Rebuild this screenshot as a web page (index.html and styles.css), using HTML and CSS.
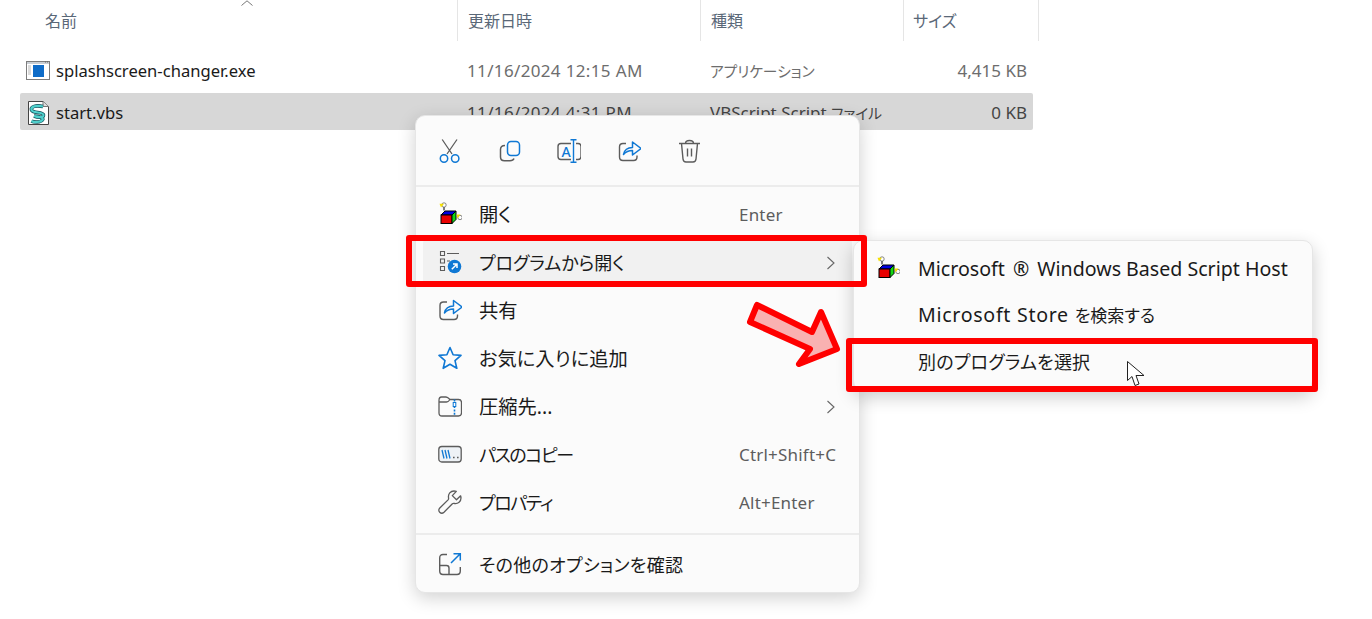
FILE: index.html
```html
<!DOCTYPE html>
<html lang="ja">
<head>
  <meta charset="UTF-8">
  <title>start.vbs</title>
  <link rel="stylesheet" href="styles.css">
</head>
<body>

  <div class="list-head">
    <div class="col-name">名前<svg class="sort" width="14" height="6" viewBox="0 0 14 6"><path d="M1.500 5.500 7 0.800 12.500 5.500" fill="none" stroke="#777" stroke-width="1"/></svg></div>
    <div class="col-date">更新日時</div>
    <div class="col-type">種類</div>
    <div class="col-size">サイズ</div>
  </div>

  <div class="row">
    <div class="cell-name">
      <svg class="file-icon" width="24" height="24" viewBox="0 0 24 24">
        <rect x="0.500" y="2.500" width="23" height="18" fill="#fff" stroke="#7d7d7d"/>
        <rect x="1" y="3" width="22" height="2" fill="#c9ced4"/>
        <rect x="7" y="6" width="11" height="12" fill="#0f6cc8"/>
        <path d="M2 7h3M2 9h3M2 11h3M2 13h3M2 15h3" stroke="#b8b8b8"/>
        <path d="M19 3h1M21 3h1" stroke="#666"/>
      </svg>
      splashscreen-changer.exe
    </div>
    <div class="cell-date">11/16/2024 12:15 AM</div>
    <div class="cell-type"><span class="kana">アプリケーション</span></div>
    <div class="cell-size">4,415 KB</div>
  </div>

  <div class="row selected">
    <div class="cell-name">
      <svg class="file-icon" width="24" height="24" viewBox="0 0 24 24">
        <path d="M2.500 0.500H17L22.500 5.500V23.500H2.500Z" fill="#fff" stroke="#444"/>
        <path d="M17 0.500V5.500H22.500" fill="#ddd" stroke="#777"/>
        <path d="M17 5.500C10 4 4.500 5.500 5.500 9S17 10.500 17.500 14 10.500 16 8 15M8 15C12 15.500 18.500 16.500 16.500 19S8 21.500 5.500 20" fill="none" stroke="#14505a" stroke-width="3.600"/>
        <path d="M17 5.500C10 4 4.500 5.500 5.500 9S17 10.500 17.500 14 10.500 16 8 15M8 15C12 15.500 18.500 16.500 16.500 19S8 21.500 5.500 20" fill="none" stroke="#4fd0cc" stroke-width="2.200"/>
      </svg>
      start.vbs
    </div>
    <div class="cell-date">11/16/2024 4:31 PM</div>
    <div class="cell-type">VBScript Script <span class="kana">ファイル</span></div>
    <div class="cell-size">0 KB</div>
  </div>

  <div class="menu">
    <div class="toolbar">
      <svg class="icon" viewBox="0 0 24 24">
        <path d="M5.200 0.500 15 15M20 0.500 10 15" fill="none" stroke="#5c5c5c" stroke-width="1.300"/>
        <circle cx="7" cy="19.500" r="3.700" fill="none" stroke="#0f78d4" stroke-width="1.500"/>
        <circle cx="18.200" cy="19.500" r="3.700" fill="none" stroke="#0f78d4" stroke-width="1.500"/>
      </svg>
      <svg class="icon" viewBox="0 0 24 24">
        <rect x="10.500" y="2.500" width="12" height="14" rx="3.500" fill="none" stroke="#0f78d4" stroke-width="1.500"/>
        <path d="M8 6.500C5 6.500 3.500 8 3.500 10.500V18C3.500 20.500 5 21.800 7.500 21.800H13C15 21.800 16.500 20.800 17 19.500" fill="none" stroke="#5c5c5c" stroke-width="1.500"/>
      </svg>
      <svg class="icon" viewBox="0 0 24 24">
        <path d="M14 4.500H4C2 4.500 1 5.500 1 7.500V17.500C1 19.500 2 20.500 4 20.500H14M19 4.500H21C23 4.500 24 5.500 24 7.500V17.500C24 19.500 23 20.500 21 20.500H19" fill="none" stroke="#5c5c5c" stroke-width="1.400"/>
        <path d="M13.500 0.700H19.500M16.500 0.700V23.300M13.500 23.300H19.500" fill="none" stroke="#0f78d4" stroke-width="1.400"/>
        <text class="icon-letter" x="4.500" y="17.500">A</text>
      </svg>
      <svg class="icon" viewBox="0 0 24 24">
        <path d="M9 4.500H6C3.500 4.500 2.500 5.500 2.500 8V18C2.500 20.500 3.500 21.500 6 21.500H16.500C19 21.500 20 20.500 20 18V16.500" fill="none" stroke="#5c5c5c" stroke-width="1.400"/>
        <path d="M6.500 15.500C7.500 10.500 11 8.500 15.500 8.500V3L24 9.500 15.500 16V11.500C12 11.500 9 12.500 6.500 15.500Z" fill="none" stroke="#0f78d4" stroke-width="1.500" stroke-linejoin="round"/>
      </svg>
      <svg class="icon" viewBox="0 0 24 24">
        <path d="M2 4.500H23M8.500 4.500C8.500 2.500 10 1.500 12.500 1.500S16.500 2.500 16.500 4.500M4.500 4.500 6 20C6.200 22 7.500 23 9 23H16C17.500 23 18.800 22 19 20L20.500 4.500" fill="none" stroke="#5c5c5c" stroke-width="1.400"/>
        <path d="M10.500 9.500V17.500M14.500 9.500V17.500" stroke="#5c5c5c" stroke-width="1.400"/>
      </svg>
    </div>
    <div class="sep"></div>

    <div class="items">
      <div class="item">
        <svg class="icon" viewBox="0 0 24 24">
          <use href="#cube"/>
        </svg>
        <span class="label kanji">開く</span>
        <span class="hint">Enter</span>
      </div>
      <div class="item hover">
        <svg class="icon" viewBox="0 0 24 24">
          <path d="M2.500 1.500h4v4h-4zM2.500 9h4v4h-4zM2.500 16.500h4v4h-4z" fill="none" stroke="#5c5c5c" stroke-width="1.100"/>
          <path d="M9 3.500H21M9 11H12" stroke="#5c5c5c" stroke-width="1.200"/>
          <circle cx="16.500" cy="16.500" r="6.800" fill="#0f78d4"/>
          <path d="M13.800 19.200 18.800 14.200M15 14H19V18" fill="none" stroke="#fff" stroke-width="1.500"/>
        </svg>
        <span class="label">プログラムから開く</span>
        <span class="hint chev"><svg width="10" height="14" viewBox="0 0 10 14"><path d="M1.500 1 8 7 1.500 13" fill="none" stroke="#666" stroke-width="1.100"/></svg></span>
      </div>
      <div class="item">
        <svg class="icon" viewBox="0 0 24 24">
          <path d="M9 4H5.500C3 4 2 5 2 7.500V18C2 20.500 3 21.500 5.500 21.500H16C18.500 21.500 19.500 20.500 19.500 18V16.500" fill="none" stroke="#5c5c5c" stroke-width="1.400"/>
          <path d="M6.500 15C7.500 10 11 8 15.500 8V2.500L24 9 15.500 15.500V11C12 11 9 12 6.500 15Z" fill="none" stroke="#0f78d4" stroke-width="1.500" stroke-linejoin="round"/>
        </svg>
        <span class="label kanji">共有</span>
      </div>
      <div class="item">
        <svg class="icon" viewBox="0 0 24 24">
          <path d="M12 1.500 15.100 8.700 23 9.400 17 14.600 18.800 22.300 12 18.300 5.200 22.300 7 14.600 1 9.400 8.900 8.700Z" fill="none" stroke="#0f78d4" stroke-width="1.600" stroke-linejoin="round"/>
        </svg>
        <span class="label kanji">お気に入りに追加</span>
      </div>
      <div class="item">
        <svg class="icon" viewBox="0 0 24 24">
          <path d="M1 6.500C1 4 2 3 3.500 3H8C9.500 3 10.500 4 12 5.500H20.500C22.500 5.500 23.500 6.500 23.500 8.500V19C23.500 21 22.500 22 20.500 22H4C2 22 1 21 1 19Z M1 8H8.500C10 8 11 7 12 5.500" fill="none" stroke="#5c5c5c" stroke-width="1.300"/>
          <path d="M16.500 5.500V22" stroke="#0f78d4" stroke-width="1.600" stroke-dasharray="2 1.300"/>
          <rect x="15.200" y="8.500" width="2.600" height="4" fill="#fff" stroke="#0f78d4"/>
        </svg>
        <span class="label kanji">圧縮先...</span>
        <span class="hint chev"><svg width="10" height="14" viewBox="0 0 10 14"><path d="M1.500 1 8 7 1.500 13" fill="none" stroke="#666" stroke-width="1.100"/></svg></span>
      </div>
      <div class="item">
        <svg class="icon" viewBox="0 0 24 24">
          <rect x="0.800" y="4.500" width="22.400" height="15.500" rx="3" fill="#eef2f6" stroke="#5c5c5c" stroke-width="1.300"/>
          <path d="M4 8 6 16.500M7 8 9 16.500M10 8 12 16.500" stroke="#0f78d4" stroke-width="1.300"/>
          <path d="M15 15.500h1.600M19 15.500h1.600" stroke="#5c5c5c" stroke-width="1.600"/>
        </svg>
        <span class="label tight">パスのコピー</span>
        <span class="hint">Ctrl+Shift+C</span>
      </div>
      <div class="item">
        <svg class="icon" viewBox="0 0 24 24">
          <path d="M16 1C12.500 1 10 4 10.500 7.500C10.600 8.500 10.800 9 10.300 9.600L1.800 18C0.500 19.300 0.500 21 1.700 22.200S4.700 23.400 6 22.200L14.400 13.700C15 13.200 15.600 13.400 16.500 13.500C20 14 23 11.500 23 8C23 7.200 22.900 6.500 22.600 5.800L18.500 9.800 14.300 5.600 18.300 1.400C17.600 1.100 16.800 1 16 1Z" fill="none" stroke="#5c5c5c" stroke-width="1.300" stroke-linejoin="round"/>
        </svg>
        <span class="label tight">プロパティ</span>
        <span class="hint">Alt+Enter</span>
      </div>
    </div>

    <div class="sep sep-low"></div>

    <div class="item">
      <svg class="icon" viewBox="0 0 24 24">
        <path d="M9 2.500H5C2.800 2.500 1.700 3.700 1.700 6V19C1.700 21.300 2.800 22.500 5 22.500H19C21.200 22.500 22.300 21.300 22.300 19V15M1.700 13.500H8.500C10 13.500 11 14.500 11 16V22.500" fill="none" stroke="#5c5c5c" stroke-width="1.400"/>
        <path d="M13 11 22 2M15.500 1.700H22.300V8.500" fill="none" stroke="#0f78d4" stroke-width="1.500"/>
      </svg>
      <span class="label wide">その他のオプションを確認</span>
    </div>
  </div>

  <div class="submenu">
    <div class="sub-item">
      <svg class="icon" viewBox="0 0 24 24">
        <use href="#cube"/>
      </svg>
      <span class="sub-label">Microsoft <span class="reg">®</span> Windows Based Script Host</span>
    </div>
    <div class="sub-item"><span class="sub-label no-icon store">Microsoft Store <span class="sub-kana">を検索する</span></span></div>
    <div class="sub-item"><span class="sub-label no-icon"><span class="sub-cjk">別のプログラムを選択</span></span></div>
  </div>

  <!-- annotations -->
  <div class="mark mark-one"></div>
  <div class="mark mark-two"></div>
  <svg class="arrow" width="1372" height="619" viewBox="0 0 1372 619">
    <path d="M757 305 750 322 810 349 799 364 837 349 821 312 812 332Z" fill="#f9b1b1" stroke="#f00" stroke-width="6" stroke-linejoin="round"/>
    <path d="M1127.500 361.500V380.500L1132 376.500 1135 385.500 1139 384 1136 375.500 1144 375.500Z" fill="#fff" stroke="#222" stroke-width="1"/>
  </svg>

  <svg class="defs" width="0" height="0">
    <defs>
      <g id="cube">
        <path d="M3 13 7 9H18L14 13Z" fill="#0000e0" stroke="#000"/>
        <rect x="3" y="13" width="11" height="8.500" fill="#e80000" stroke="#000"/>
        <path d="M14 13 18 9V17.500L14 21.500Z" fill="#12d812" stroke="#000"/>
        <path d="M6 8.500V5" stroke="#000"/>
        <circle cx="6" cy="3" r="2.200" fill="#fff" stroke="#555" stroke-width="0.700"/>
        <path d="M1.500 1.800H6L3 5.500Z" fill="#f5e000"/>
        <circle cx="22" cy="15.500" r="2.200" fill="#fff" stroke="#555" stroke-width="0.700"/>
        <path d="M18.500 12.500H22.500L19.500 16.500Z" fill="#f5e000"/>
      </g>
    </defs>
  </svg>

</body>
</html>
```

FILE: styles.css
```css
body {
  margin: 0;
  width: 1372px;
  height: 619px;
  overflow: hidden;
  background: #fff;
  position: relative;
  font-family: "Noto Sans", "Noto Sans CJK JP", sans-serif;
  font-size: 17px;
  color: #1a1a1a;
  font-feature-settings: "palt";
}

/* file list */
.list-head {
  display: flex;
  height: 41px;
  margin-bottom: 11px;
  color: #5a6878;
  font-size: 16px;
}
.list-head > div {
  display: flex;
  align-items: center;
  border-right: 1px solid #e5e5e5;
  box-sizing: border-box;
  padding-bottom: 2px;
}
.col-name {
  width: 458px;
  padding-left: 45px;
  position: relative;
}
.sort {
  position: absolute;
  left: 240px;
  top: 0;
}
.col-date {
  width: 243px;
  padding-left: 10px;
}
.col-type {
  width: 203px;
  padding-left: 10px;
}
.col-size {
  width: 135px;
  padding-left: 9px;
}

.row {
  display: flex;
  align-items: center;
  box-sizing: border-box;
  width: 1013px;
  height: 37px;
  margin: 0 0 4px 20px;
  border-radius: 2px;
  color: #6d6d6d;
}
.row.selected {
  background: #d7d7d7;
  padding-top: 2px;
}
.cell-name {
  width: 438px;
  display: flex;
  align-items: center;
  color: #1a1a1a;
  font-size: 16.6px;
}
.file-icon {
  margin: 0 6px 0 6px;
}
.cell-date {
  width: 242px;
  padding-left: 9px;
  box-sizing: border-box;
  letter-spacing: 0.35px;
}
.cell-type {
  width: 203px;
  padding-left: 10px;
  box-sizing: border-box;
}
.kana {
  font-size: 14.7px;
}
.cell-size {
  width: 124px;
  text-align: right;
}
.selected .cell-date,
.selected .cell-type,
.selected .cell-size {
  color: #444;
}

/* context menu */
.menu {
  position: absolute;
  left: 415px;
  top: 115px;
  width: 445px;
  height: 478px;
  box-sizing: border-box;
  background: #fbfbfb;
  border: 1px solid #e6e6e6;
  border-radius: 10px;
  box-shadow: 0 5px 18px rgba(0, 0, 0, 0.18);
  font-size: 18px;
}
.toolbar {
  display: flex;
  gap: 36px;
  height: 69px;
  align-items: center;
  padding-left: 21px;
}
.icon {
  width: 24px;
  height: 24px;
  flex: none;
}
.icon-letter {
  font-family: "Noto Sans", sans-serif;
  font-size: 14px;
  font-weight: 500;
  fill: #0f78d4;
}
.sep {
  height: 2px;
  background: #ececec;
}
.items {
  margin-top: 3px;
}
.sep-low {
  margin-top: 7px;
}
.item {
  display: flex;
  align-items: center;
  height: 48px;
  margin: 0 7px;
  padding-left: 15px;
  border-radius: 5px;
}
.item.hover {
  background: #f1f1f1;
}
.label {
  margin-left: 17px;
  flex: 1;
}
.kanji {
  font-size: 19.3px;
}
.tight {
  letter-spacing: -1.4px;
}
.wide {
  letter-spacing: 0.3px;
}
.hint {
  width: 113px;
  font-size: 17px;
  padding-top: 1px;
  letter-spacing: 0.2px;
  color: #5d5d5d;
}
.chev {
  display: flex;
  justify-content: flex-end;
  padding-right: 16px;
  box-sizing: border-box;
}
.sep-low + .item {
  margin-top: 5px;
}

/* submenu */
.submenu {
  position: absolute;
  left: 853px;
  top: 240px;
  width: 460px;
  height: 151px;
  box-sizing: border-box;
  padding-top: 4px;
  background: #fbfbfb;
  border: 1px solid #e6e6e6;
  border-radius: 10px;
  box-shadow: 0 6px 18px rgba(0, 0, 0, 0.2);
  font-size: 19.6px;
}
.sub-item {
  display: flex;
  align-items: center;
  height: 46.5px;
  padding-left: 22px;
}
.sub-label {
  margin-left: 18px;
}
.no-icon {
  margin-left: 42px;
}
.store {
  letter-spacing: 0.7px;
}
.sub-kana {
  font-size: 17px;
  letter-spacing: 0;
}
.sub-cjk {
  font-size: 18px;
  letter-spacing: 0.2px;
}
.reg {
  margin: 0 3px;
}

/* red annotations */
.mark {
  position: absolute;
  box-sizing: border-box;
  border: 6px solid #f00;
  border-radius: 3px;
}
.mark-one {
  left: 406px;
  top: 235px;
  width: 461px;
  height: 52px;
}
.mark-two {
  left: 846px;
  top: 338px;
  width: 472px;
  height: 54px;
}
.arrow {
  position: absolute;
  left: 0;
  top: 0;
}
.defs {
  position: absolute;
}
```
